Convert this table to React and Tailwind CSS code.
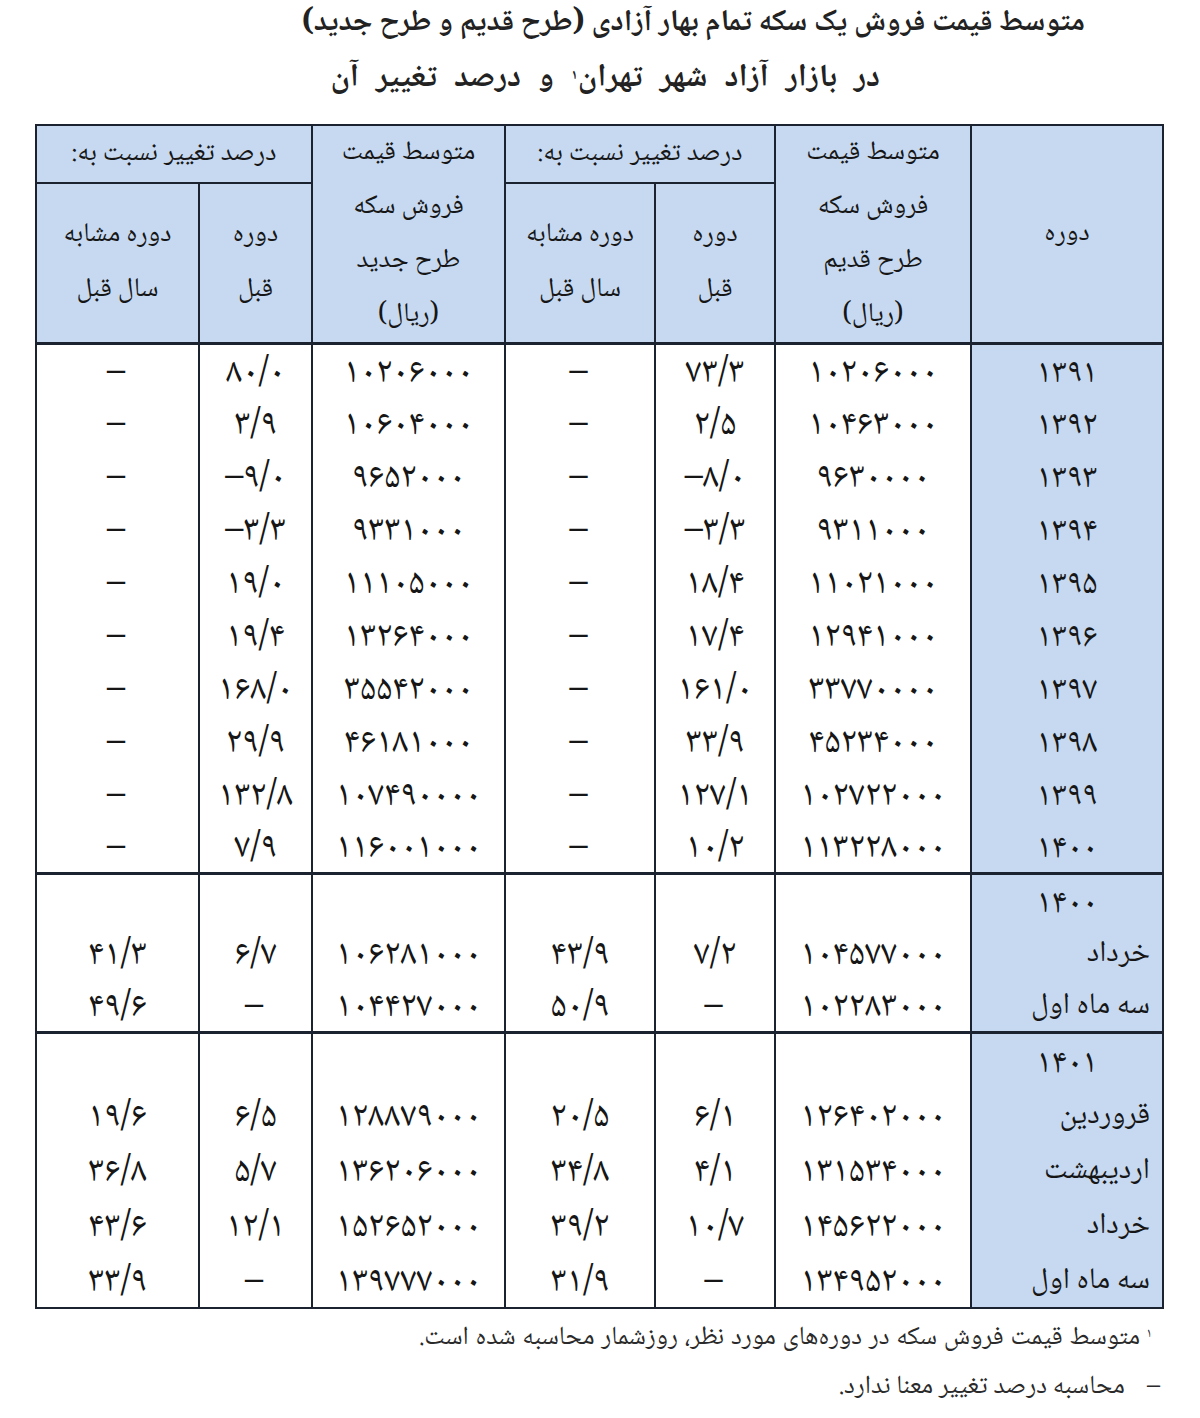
const F = { fontFamily: '"Noto Naskh Arabic", "Noto Sans Arabic", "DejaVu Sans", serif' };

const sec1 = [
  ["۱۳۹۱", "۱۰۲۰۶۰۰۰", "۷۳/۳", "–", "۱۰۲۰۶۰۰۰", "۸۰/۰", "–"],
  ["۱۳۹۲", "۱۰۴۶۳۰۰۰", "۲/۵", "–", "۱۰۶۰۴۰۰۰", "۳/۹", "–"],
  ["۱۳۹۳", "۹۶۳۰۰۰۰", "–۸/۰", "–", "۹۶۵۲۰۰۰", "–۹/۰", "–"],
  ["۱۳۹۴", "۹۳۱۱۰۰۰", "–۳/۳", "–", "۹۳۳۱۰۰۰", "–۳/۳", "–"],
  ["۱۳۹۵", "۱۱۰۲۱۰۰۰", "۱۸/۴", "–", "۱۱۱۰۵۰۰۰", "۱۹/۰", "–"],
  ["۱۳۹۶", "۱۲۹۴۱۰۰۰", "۱۷/۴", "–", "۱۳۲۶۴۰۰۰", "۱۹/۴", "–"],
  ["۱۳۹۷", "۳۳۷۷۰۰۰۰", "۱۶۱/۰", "–", "۳۵۵۴۲۰۰۰", "۱۶۸/۰", "–"],
  ["۱۳۹۸", "۴۵۲۳۴۰۰۰", "۳۳/۹", "–", "۴۶۱۸۱۰۰۰", "۲۹/۹", "–"],
  ["۱۳۹۹", "۱۰۲۷۲۲۰۰۰", "۱۲۷/۱", "–", "۱۰۷۴۹۰۰۰۰", "۱۳۲/۸", "–"],
  ["۱۴۰۰", "۱۱۳۲۲۸۰۰۰", "۱۰/۲", "–", "۱۱۶۰۰۱۰۰۰", "۷/۹", "–"],
];

const sec2 = [
  ["۱۴۰۰", "", "", "", "", "", ""],
  ["خرداد", "۱۰۴۵۷۷۰۰۰", "۷/۲", "۴۳/۹", "۱۰۶۲۸۱۰۰۰", "۶/۷", "۴۱/۳"],
  ["سه ماه اول", "۱۰۲۲۸۳۰۰۰", "–", "۵۰/۹", "۱۰۴۴۲۷۰۰۰", "–", "۴۹/۶"],
];

const sec3 = [
  ["۱۴۰۱", "", "", "", "", "", ""],
  ["قروردین", "۱۲۶۴۰۲۰۰۰", "۶/۱", "۲۰/۵", "۱۲۸۸۷۹۰۰۰", "۶/۵", "۱۹/۶"],
  ["اردیبهشت", "۱۳۱۵۳۴۰۰۰", "۴/۱", "۳۴/۸", "۱۳۶۲۰۶۰۰۰", "۵/۷", "۳۶/۸"],
  ["خرداد", "۱۴۵۶۲۲۰۰۰", "۱۰/۷", "۳۹/۲", "۱۵۲۶۵۲۰۰۰", "۱۲/۱", "۴۳/۶"],
  ["سه ماه اول", "۱۳۴۹۵۲۰۰۰", "–", "۳۱/۹", "۱۳۹۷۷۷۰۰۰", "–", "۳۳/۹"],
];

function Section({ rows, h, labelAlign }) {
  return rows.map((r, i) => (
    <tr key={i} className={h}>
      {r.map((c, j) => {
        const top = i === 0 ? "border-t-[3px]" : "";
        if (j === 0) {
          const isLabel = labelAlign && i > 0;
          return (
            <td key={j} className={`border-x-2 border-[#1b2230] bg-[#c6d9f1] leading-none ${isLabel ? "text-right pr-[12px] pl-0 pb-0 pt-[4px] text-[30px]" : "text-center px-0 pb-0 pt-[8px]"} ${top} align-middle`}>
              {isLabel ? c : <span dir="ltr" className="text-[34px] tracking-[1px] leading-none">{c}</span>}
            </td>
          );
        }
        return (
          <td key={j} className={`border-x-2 border-[#1b2230] text-center leading-none ${top} px-0 pb-0 pt-[8px] align-middle`}>
            <span dir="ltr" className="text-[36px] tracking-[3px] leading-none">{c}</span>
          </td>
        );
      })}
    </tr>
  ));
}

export default function App() {
  const hc = "border-2 border-[#1b2230] bg-[#c6d9f1] p-0 text-center align-middle font-normal";
  return (
    <div className="w-[1200px] min-h-[1418px] bg-white text-[#161616]" style={F} dir="rtl">
      <div className="pt-[2px] flex flex-col gap-[11px] font-bold text-[#222]">
        <div className="leading-[44px] text-[30px] text-right pr-[115px]">متوسط قیمت فروش یک سکه تمام بهار آزادی (طرح قدیم و طرح جدید)</div>
        <div className="leading-[44px] text-[32px] text-right pr-[320px] [word-spacing:10px]">
          در بازار آزاد شهر تهران<sup className="text-[14px]">۱</sup> و درصد تغییر آن
        </div>
      </div>
      <div className="mt-[23px] pr-[36px]">
        <table className="w-[1127px] table-fixed border-collapse border-2 border-[#1b2230]">
          <colgroup>
            <col className="w-[192px]" />
            <col className="w-[196px]" />
            <col className="w-[120px]" />
            <col className="w-[150px]" />
            <col className="w-[193px]" />
            <col className="w-[113px]" />
            <col className="w-[163px]" />
          </colgroup>
          <thead className="text-[27px]">
            <tr className="h-[56px]">
              <th rowSpan={2} className={hc}>دوره</th>
              <th rowSpan={2} className={`${hc} leading-[54px] align-top`}>
                متوسط قیمت<br />فروش سکه<br />طرح قدیم<br />(ریال)
              </th>
              <th colSpan={2} className={hc}>درصد تغییر نسبت به:</th>
              <th rowSpan={2} className={`${hc} leading-[54px] align-top`}>
                متوسط قیمت<br />فروش سکه<br />طرح جدید<br />(ریال)
              </th>
              <th colSpan={2} className={hc}>درصد تغییر نسبت به:</th>
            </tr>
            <tr className="h-[156px]">
              <th className={`${hc} leading-[55px]`}>دوره<br />قبل</th>
              <th className={`${hc} leading-[55px]`}>دوره مشابه<br />سال قبل</th>
              <th className={`${hc} leading-[55px]`}>دوره<br />قبل</th>
              <th className={`${hc} leading-[55px]`}>دوره مشابه<br />سال قبل</th>
            </tr>
          </thead>
          <tbody>
            <Section rows={sec1} h="h-[53px]" />
            <Section rows={sec2} h="h-[53px]" labelAlign />
            <Section rows={sec3} h="h-[55px]" labelAlign />
          </tbody>
        </table>
      </div>
      <div className="mt-[12px] flex flex-col gap-[15px] text-[26px] text-[#2a2a2a]">
        <div className="pr-[48px] leading-[34px] [word-spacing:1px]">
          <sup className="text-[13px] ml-[6px]">۱</sup>متوسط قیمت فروش سکه در دوره‌های مورد نظر، روزشمار محاسبه شده است.
        </div>
        <div className="pr-[40px] leading-[34px] flex gap-[22px]">
          <span>–</span>
          <span>محاسبه درصد تغییر معنا ندارد.</span>
        </div>
      </div>
    </div>
  );
}
